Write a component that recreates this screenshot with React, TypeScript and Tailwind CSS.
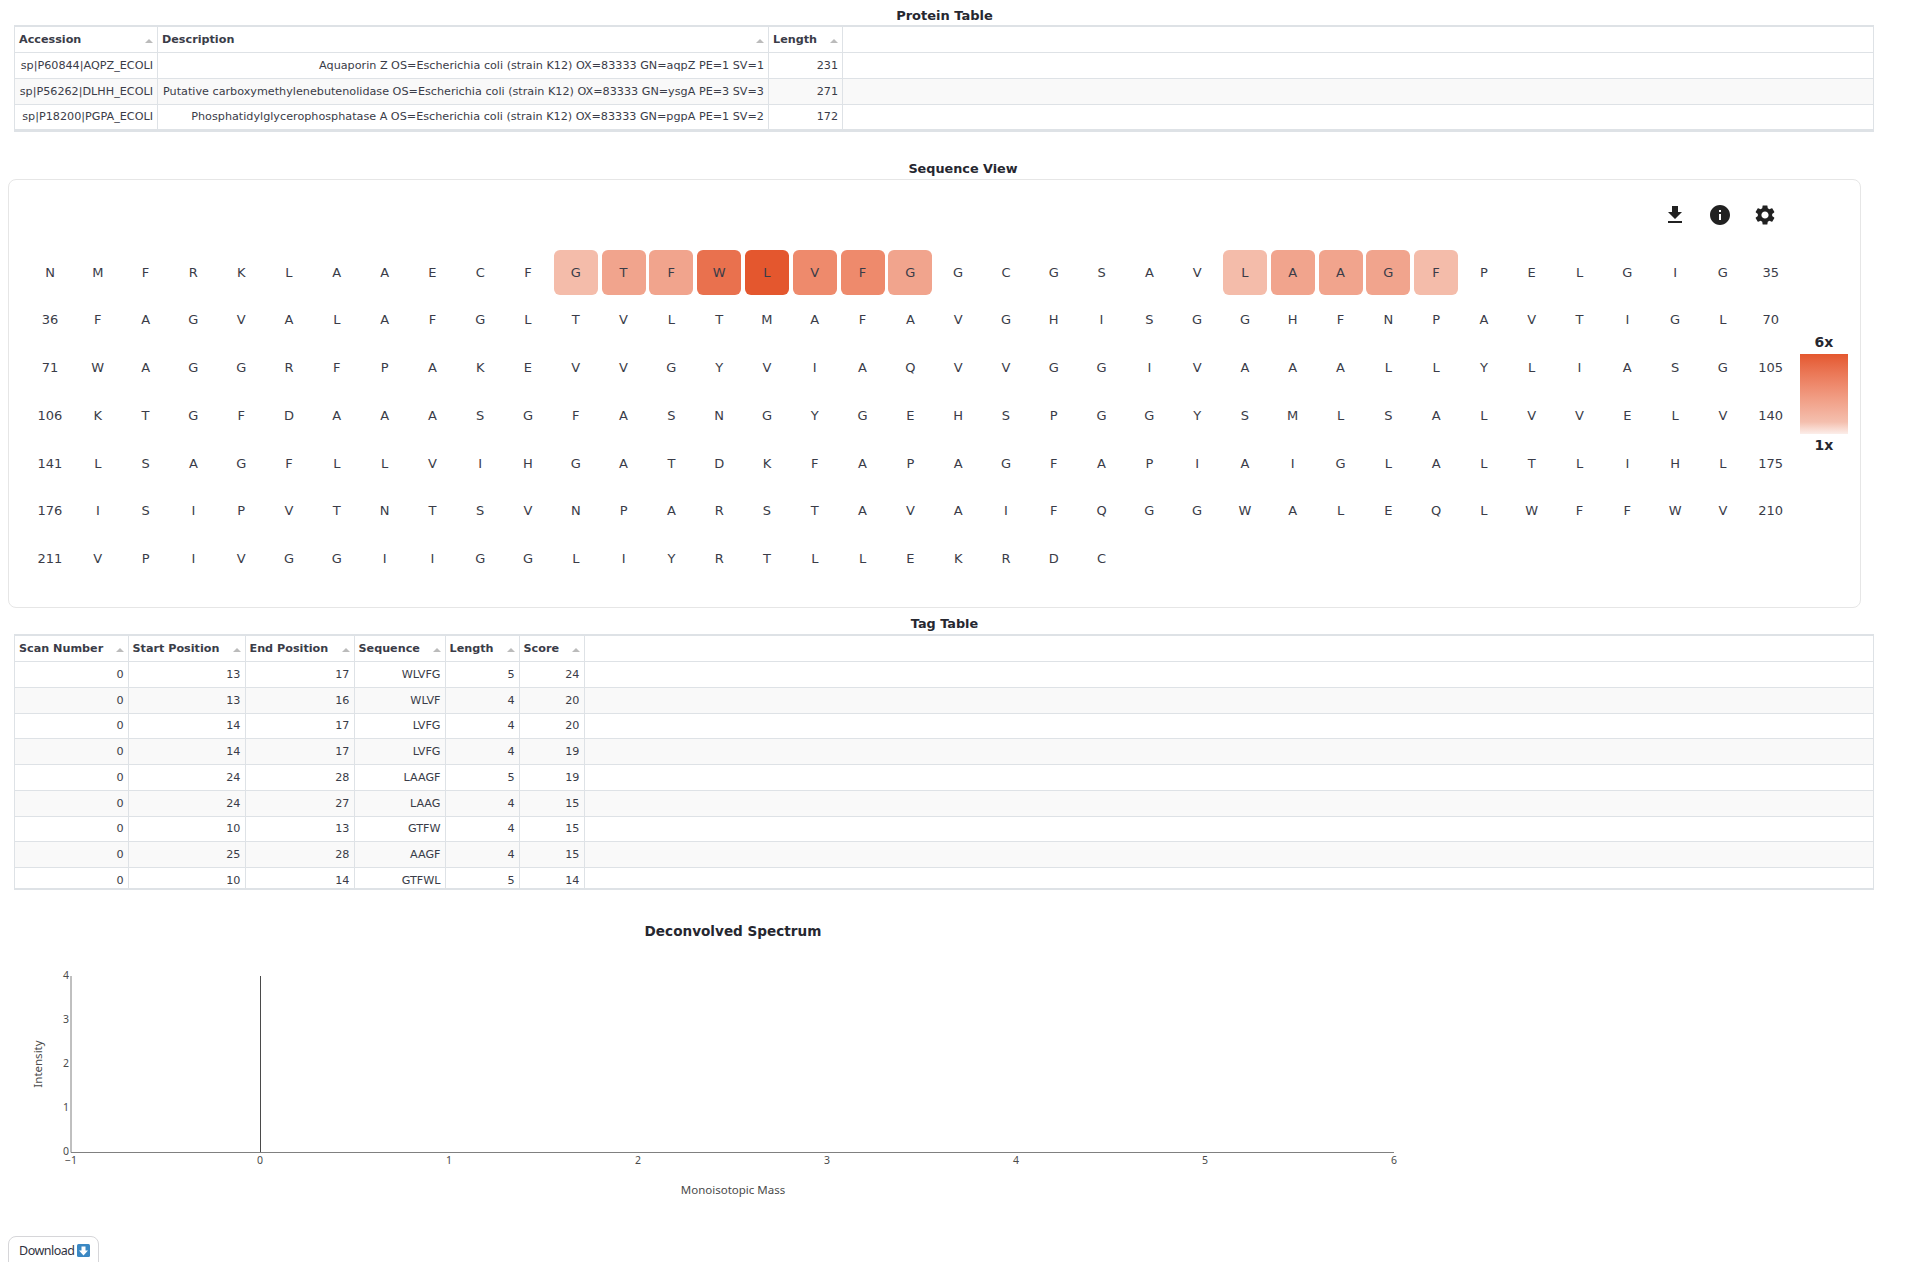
const proteinCols = [
  { name: "Accession", width: "w-[143px]" },
  { name: "Description", width: "w-[611px]" },
  { name: "Length", width: "w-[74px]" },
];

const proteinRows = [
  ["sp|P60844|AQPZ_ECOLI", "Aquaporin Z OS=Escherichia coli (strain K12) OX=83333 GN=aqpZ PE=1 SV=1", "231"],
  ["sp|P56262|DLHH_ECOLI", "Putative carboxymethylenebutenolidase OS=Escherichia coli (strain K12) OX=83333 GN=ysgA PE=3 SV=3", "271"],
  ["sp|P18200|PGPA_ECOLI", "Phosphatidylglycerophosphatase A OS=Escherichia coli (strain K12) OX=83333 GN=pgpA PE=1 SV=2", "172"],
];

const tagCols = [
  { name: "Scan Number", width: "w-[113.5px]" },
  { name: "Start Position", width: "w-[117px]" },
  { name: "End Position", width: "w-[109px]" },
  { name: "Sequence", width: "w-[91px]" },
  { name: "Length", width: "w-[74px]" },
  { name: "Score", width: "w-[65px]" },
];

const tagRows = [
  ["0", "13", "17", "WLVFG", "5", "24"],
  ["0", "13", "16", "WLVF", "4", "20"],
  ["0", "14", "17", "LVFG", "4", "20"],
  ["0", "14", "17", "LVFG", "4", "19"],
  ["0", "24", "28", "LAAGF", "5", "19"],
  ["0", "24", "27", "LAAG", "4", "15"],
  ["0", "10", "13", "GTFW", "4", "15"],
  ["0", "25", "28", "AAGF", "4", "15"],
  ["0", "10", "14", "GTFWL", "5", "14"],
];

const sequence = [
  "N M F R K L A A E C F G T F W L V F G G C G S A V L A A G F P E L G I G 35",
  "36 F A G V A L A F G L T V L T M A F A V G H I S G G H F N P A V T I G L 70",
  "71 W A G G R F P A K E V V G Y V I A Q V V G G I V A A A L L Y L I A S G 105",
  "106 K T G F D A A A S G F A S N G Y G E H S P G G Y S M L S A L V V E L V 140",
  "141 L S A G F L L V I H G A T D K F A P A G F A P I A I G L A L T L I H L 175",
  "176 I S I P V T N T S V N P A R S T A V A I F Q G G W A L E Q L W F F W V 210",
  "211 V P I V G G I I G G L I Y R T L L E K R D C",
];

// coverage colours for the first row, by column
const coverage: Record<number, string> = {
  11: "bg-[#f4bcaa]",
  12: "bg-[#f1a48d]",
  13: "bg-[#f1a48d]",
  14: "bg-[#e9714e]",
  15: "bg-[#e4572e]",
  16: "bg-[#ee8a6c]",
  17: "bg-[#ee8a6c]",
  18: "bg-[#f1a48d]",
  25: "bg-[#f4bcaa]",
  26: "bg-[#f1a48d]",
  27: "bg-[#f1a48d]",
  28: "bg-[#f1a48d]",
  29: "bg-[#f4bcaa]",
};

function SortArrow() {
  return <span className="h-0 w-0 border-x-[4px] border-b-[4px] border-x-transparent border-b-[#bbbbbb]" />;
}

function DataTable({ cols, rows, bodyHeight }: { cols: { name: string; width: string }[]; rows: string[][]; bodyHeight: string }) {
  return (
    <div className="ml-[14px] w-[1860px] border-x border-y-2 border-[#dee2e6] text-[11.2px] text-[#3a3c48]">
      <div className="flex h-[26px] border-b border-[#dee2e6] font-bold">
        {cols.map((c) => (
          <div key={c.name} className={`flex shrink-0 items-center justify-between border-r border-[#dee2e6] px-1 pt-[2px] ${c.width}`}>
            <span>{c.name}</span>
            <SortArrow />
          </div>
        ))}
      </div>
      <div className={`overflow-hidden ${bodyHeight}`}>
        {rows.map((row, i) => (
          <div key={i} className={`flex h-[25.75px] border-b border-[#dee2e6] ${i % 2 ? "bg-[#f9f9f9]" : "bg-white"}`}>
            {row.map((cell, j) => (
              <div key={j} className={`flex shrink-0 items-center justify-end overflow-hidden whitespace-nowrap border-r border-[#dee2e6] px-1 pt-[2px] ${cols[j].width}`}>
                {cell}
              </div>
            ))}
          </div>
        ))}
      </div>
    </div>
  );
}

function SequenceGrid() {
  return (
    <div className="grid w-[1765px] shrink-0 grid-cols-[repeat(37,44px)] gap-x-[3.8px] gap-y-[2.7px] text-[13px] text-[#3a3c48]">
      {sequence.map((line, r) =>
        line.split(" ").map((ch, c) => (
          <div key={`${r}-${c}`} className={`flex h-[45px] items-center justify-center rounded-[6px] ${r === 0 && coverage[c] ? coverage[c] : ""}`}>
            {ch}
          </div>
        )),
      )}
    </div>
  );
}

function IconButton({ d }: { d: string }) {
  return (
    <div className="flex h-10 w-10 items-center justify-center">
      <svg viewBox="0 0 24 24" className="h-6 w-6 fill-[#212121]">
        <path d={d} />
      </svg>
    </div>
  );
}

function Spectrum() {
  const xTicks = [-1, 0, 1, 2, 3, 4, 5, 6];
  const yTicks = [0, 1, 2, 3, 4];
  const font = "'Noto Sans', sans-serif";
  return (
    <svg width="1450" height="260" className="block" fontFamily={font}>
      <line x1="71" y1="16" x2="71" y2="192.5" stroke="#808080" />
      <line x1="71" y1="192.5" x2="1394" y2="192.5" stroke="#808080" />
      <line x1="260.5" y1="16" x2="260.5" y2="192" stroke="#4a4a4a" />
      {yTicks.map((t) => (
        <text key={t} x="69" y={195 - t * 44} textAnchor="end" fontSize="10.5" fill="#4a4a4a">
          {t}
        </text>
      ))}
      {xTicks.map((t) => (
        <text key={t} x={71 + (t + 1) * 189} y="204" textAnchor="middle" fontSize="10.5" fill="#4a4a4a">
          {t < 0 ? `\u2212${-t}` : t}
        </text>
      ))}
      <text x="42" y="104" textAnchor="middle" fontSize="11.5" fill="#4a4a4a" transform="rotate(-90 42 104)">
        Intensity
      </text>
      <text x="733" y="234" textAnchor="middle" fontSize="11.5" fill="#4a4a4a">
        Monoisotopic Mass
      </text>
    </svg>
  );
}

export default function App() {
  return (
    <div className="h-[1262px] w-full overflow-hidden bg-white font-['DejaVu_Sans',sans-serif] text-[#31333f]">
      <div className="h-[25px] w-[1889px] pt-[6px] text-center text-[13px] font-bold leading-[20px] text-[#262730]">Protein Table</div>
      <DataTable cols={proteinCols} rows={proteinRows} bodyHeight="h-[76.5px]" />

      <div className="mt-[27.5px] w-[1926px] text-center text-[12.8px] font-bold leading-[20px] text-[#262730]">Sequence View</div>
      <div className="ml-2 h-[429px] w-[1853px] rounded-[8px] border border-[#e6e6e6]">
        <div className="flex justify-end gap-[4.7px] pr-[75.5px] pt-[15px]">
          <IconButton d="M5 20h14v-2H5v2zM19 9h-4V3H9v6H5l7 7 7-7z" />
          <IconButton d="M12 2C6.48 2 2 6.48 2 12s4.48 10 10 10 10-4.48 10-10S17.52 2 12 2zm1 15h-2v-6h2v6zm0-8h-2V7h2v2z" />
          <IconButton d="M19.14 12.94c.04-.3.06-.61.06-.94 0-.32-.02-.64-.07-.94l2.03-1.58c.18-.14.23-.41.12-.61l-1.92-3.32c-.12-.22-.37-.29-.59-.22l-2.39.96c-.5-.38-1.03-.7-1.62-.94l-.36-2.54c-.04-.24-.24-.41-.48-.41h-3.84c-.24 0-.43.17-.47.41l-.36 2.54c-.59.24-1.13.57-1.62.94l-2.39-.96c-.22-.08-.47 0-.59.22L2.74 8.87c-.12.21-.08.47.12.61l2.03 1.58c-.05.3-.09.63-.09.94s.02.64.07.94l-2.03 1.58c-.18.14-.23.41-.12.61l1.92 3.32c.12.22.37.29.59.22l2.39-.96c.5.38 1.03.7 1.62.94l.36 2.54c.05.24.24.41.48.41h3.84c.24 0 .44-.17.47-.41l.36-2.54c.59-.24 1.13-.56 1.62-.94l2.39.96c.22.08.47 0 .59-.22l1.92-3.32c.12-.22.07-.47-.12-.61l-2.01-1.58zM12 15.6c-1.98 0-3.6-1.62-3.6-3.6s1.62-3.6 3.6-3.6 3.6 1.62 3.6 3.6-1.62 3.6-3.6 3.6z" />
        </div>
        <div className="mt-[15px] flex items-start pl-[19px]">
          <SequenceGrid />
          <div className="ml-[7px] mt-[80px] flex w-[48px] flex-col items-center text-[14px] font-bold text-[#262730]">
            <span className="leading-[24px]">6x</span>
            <div className="h-[80px] w-full bg-linear-to-b from-[#e4572e] via-[#f4bfae] via-85% to-[#fbeeea]" />
            <span className="leading-[22px]">1x</span>
          </div>
        </div>
      </div>

      <div className="mt-[6px] h-[20px] w-[1889px] text-center text-[12.8px] font-bold leading-[20px] text-[#262730]">Tag Table</div>
      <DataTable cols={tagCols} rows={tagRows} bodyHeight="h-[225.5px]" />

      <div className="mt-[31.5px] w-[1466px] text-center text-[13.6px] font-bold leading-[20px] text-[#262730]">Deconvolved Spectrum</div>
      <div className="mt-[19px]">
        <Spectrum />
      </div>
      <button className="ml-2 mt-[16px] flex h-[40px] w-[91px] items-start gap-[3px] rounded-[8px] border border-[#d6d6d9] pl-[10px] pt-[4px] font-['Noto_Sans',sans-serif] text-[12.5px] leading-[20px] tracking-[-0.5px] text-[#31333f]">
        Download
        <svg viewBox="0 0 13 13" className="mt-[3px] h-[13px] w-[13px]">
          <rect width="13" height="13" rx="1.5" fill="#3b88c3" />
          <path d="M4.5 2.5h4v4H11l-4.5 5L2 6.5h2.5z" fill="#ffffff" />
        </svg>
      </button>
    </div>
  );
}
